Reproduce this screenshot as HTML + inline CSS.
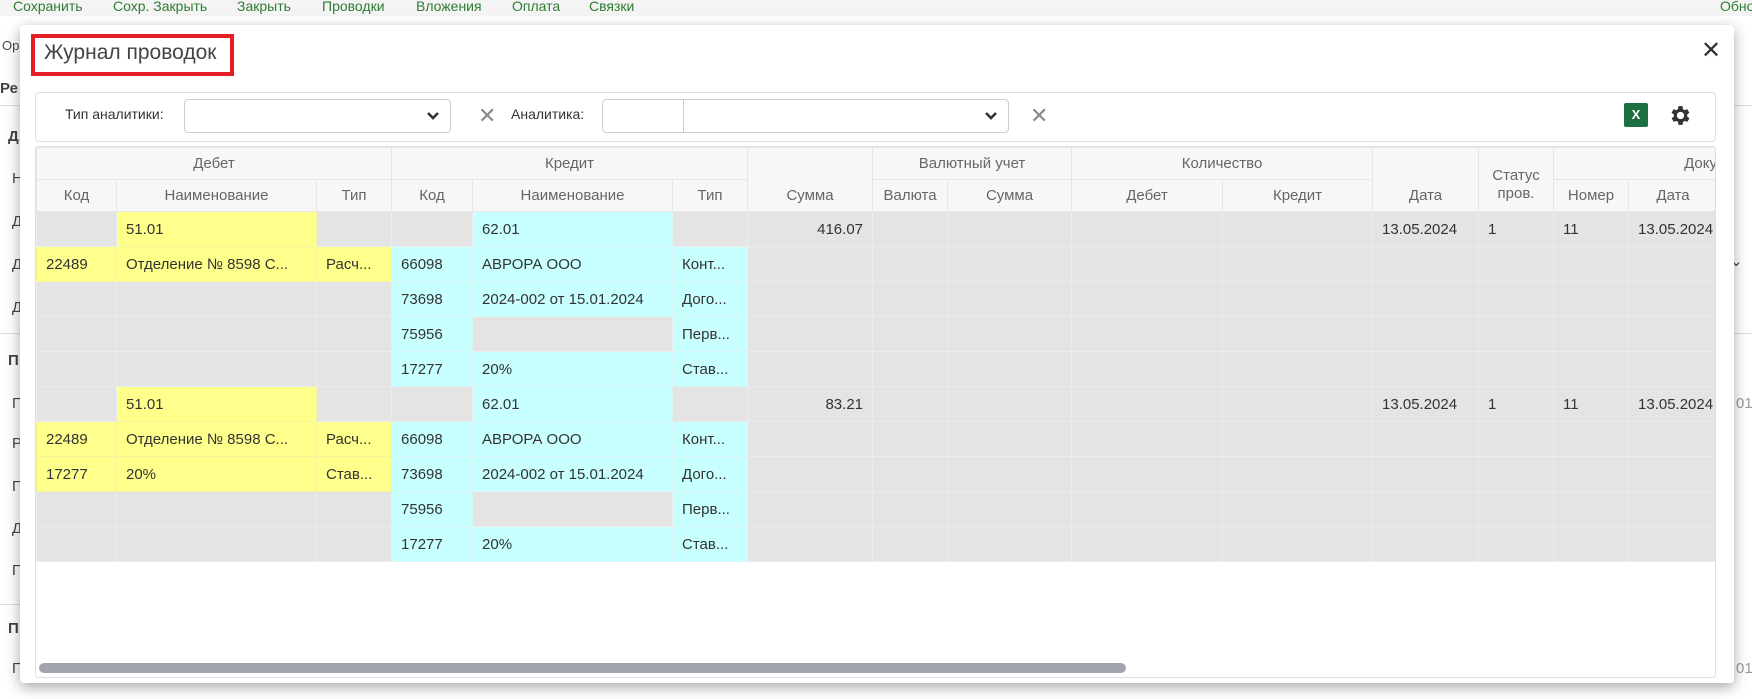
<!DOCTYPE html>
<html><head><meta charset="utf-8"><style>
*{box-sizing:border-box;margin:0;padding:0}
body{width:1752px;height:699px;overflow:hidden;background:#fff;font-family:"Liberation Sans","DejaVu Sans",sans-serif;position:relative;color:#333}
.tb{position:absolute;left:0;top:0;width:1752px;height:16px;background:#f4f4f4}
.tb span{position:absolute;top:-2px;font-size:14px;color:#2e7d32}
.bg{position:absolute;font-size:15px;color:#444}
.hl{position:absolute;height:1px;background:#dde}
.modal{position:absolute;left:20px;top:25px;width:1714px;height:658px;background:#fff;border-radius:4px;box-shadow:0 4px 14px rgba(0,0,0,.35)}
.title{position:absolute;left:11px;top:9px;width:203px;height:42px;border:4px solid #e31e24;font-size:21px;color:#444;padding:3px 0 0 9px}
.close{position:absolute;left:1681px;top:11px;font-size:24px;font-weight:bold;color:#333}
.filter{position:absolute;left:15px;top:67px;width:1681px;height:50px;border:1px solid #dde;border-radius:4px}
.sel{position:absolute;top:6px;height:34px;border:1px solid #ccc;border-radius:4px;background:#fff}
.lbl{position:absolute;top:13px;font-size:14px;color:#333}
.xx{position:absolute;top:10px;font-size:22px;color:#888}
.grid{position:absolute;left:15px;top:121px;width:1681px;height:532px;border:1px solid #dde;border-radius:3px;overflow:hidden}
table{border-collapse:collapse;table-layout:fixed;width:1681px}
td,th{white-space:nowrap;overflow:hidden;font-weight:normal}
th{background:#f7f7f7;color:#666;font-size:15px;border:1px solid #e6e6e6;text-align:center}
td{height:35px;font-size:15px;padding-left:9px;background:#e4e4e4;border:1px solid #ececec}
td.y{background:#ffff8c;border-color:#f5f5a0}
td.c{background:#c8ffff;border-color:#d8f5f5}
td.r{text-align:right;padding-right:9px}
.sb{position:absolute;left:3px;top:516px;width:1087px;height:10px;border-radius:5px;background:#a2a4ab}
</style></head><body>
<div class="tb">
<span style="left:13px">Сохранить</span><span style="left:113px">Сохр. Закрыть</span><span style="left:237px">Закрыть</span><span style="left:322px">Проводки</span><span style="left:416px">Вложения</span><span style="left:512px">Оплата</span><span style="left:589px">Связки</span><span style="left:1720px">Обно</span>
</div>
<div class="bg" style="left:2px;top:38px;font-size:13px">Ор</div>
<div class="bg" style="left:0;top:80px;font-weight:bold">Ре</div>
<div class="hl" style="left:0;top:105px;width:20px"></div>
<div class="bg" style="left:8px;top:128px;font-weight:bold">Д</div>
<div class="bg" style="left:12px;top:170px">Н</div>
<div class="bg" style="left:12px;top:213px">Д</div>
<div class="bg" style="left:12px;top:256px">Д</div>
<div class="bg" style="left:12px;top:299px">Д</div>
<div class="hl" style="left:0;top:333px;width:20px"></div>
<div class="bg" style="left:8px;top:352px;font-weight:bold">П</div>
<div class="bg" style="left:12px;top:395px">П</div>
<div class="bg" style="left:12px;top:435px">Р</div>
<div class="bg" style="left:12px;top:478px">П</div>
<div class="bg" style="left:12px;top:520px">Д</div>
<div class="bg" style="left:12px;top:562px">П</div>
<div class="hl" style="left:0;top:604px;width:20px"></div>
<div class="bg" style="left:8px;top:620px;font-weight:bold">П</div>
<div class="bg" style="left:12px;top:660px">П</div>
<div class="hl" style="left:1734px;top:105px;width:18px"></div>
<div class="hl" style="left:1734px;top:333px;width:18px"></div>
<div class="bg" style="left:1730px;top:252px">⌄</div>
<div class="bg" style="left:1736px;top:395px;color:#999">01</div>
<div class="bg" style="left:1736px;top:660px;color:#999">01</div>
<div class="modal">
<div class="title">Журнал проводок</div>
<div class="close">✕</div>
<div class="filter">
<span class="lbl" style="left:29px">Тип аналитики:</span>
<div class="sel" style="left:148px;width:267px"><svg style="position:absolute;right:10px;top:11px" width="14" height="10" viewBox="0 0 14 10"><path d="M2 2l5 5 5-5" stroke="#333" stroke-width="2.6" fill="none"/></svg></div>
<span class="xx" style="left:442px">✕</span>
<span class="lbl" style="left:475px">Аналитика:</span>
<div class="sel" style="left:566px;width:407px"><div style="position:absolute;left:80px;top:0;width:1px;height:32px;background:#ccc"></div><svg style="position:absolute;right:10px;top:11px" width="14" height="10" viewBox="0 0 14 10"><path d="M2 2l5 5 5-5" stroke="#333" stroke-width="2.6" fill="none"/></svg></div>
<span class="xx" style="left:994px">✕</span>
<div style="position:absolute;left:1588px;top:10px;width:24px;height:24px;background:#1d6f42;border-radius:2px;color:#fff;font-size:13px;font-weight:bold;text-align:center;line-height:24px">X</div>
<svg style="position:absolute;left:1632px;top:10px" width="25" height="25" viewBox="0 0 24 24"><path fill="#333" d="M19.4 13a7.5 7.5 0 0 0 0-2l2.1-1.6-2-3.5-2.5 1a7.6 7.6 0 0 0-1.7-1L15 3h-4l-.4 2.9a7.6 7.6 0 0 0-1.7 1l-2.5-1-2 3.5L6.6 11a7.5 7.5 0 0 0 0 2l-2.1 1.6 2 3.5 2.5-1a7.6 7.6 0 0 0 1.7 1L11 21h4l.4-2.9a7.6 7.6 0 0 0 1.7-1l2.5 1 2-3.5zM13 15.5a3.5 3.5 0 1 1 0-7 3.5 3.5 0 0 1 0 7z" transform="translate(-1 0)"/></svg>
</div>
<div class="grid">
<table>
<colgroup><col style="width:80px"><col style="width:200px"><col style="width:75px"><col style="width:81px"><col style="width:200px"><col style="width:75px"><col style="width:125px"><col style="width:75px"><col style="width:124px"><col style="width:151px"><col style="width:150px"><col style="width:106px"><col style="width:75px"><col style="width:75px"><col style="width:89px"></colgroup>
<tr style="height:32px"><th colspan="3">Дебет</th><th colspan="3">Кредит</th><th rowspan="2" style="vertical-align:bottom;padding-bottom:7px">Сумма</th><th colspan="2">Валютный учет</th><th colspan="2">Количество</th><th rowspan="2" style="vertical-align:bottom;padding-bottom:7px">Дата</th><th rowspan="2" style="line-height:18px;padding-top:10px">Статус<br>пров.</th><th colspan="2" style="text-align:right">Доку</th></tr>
<tr style="height:32px"><th>Код</th><th>Наименование</th><th>Тип</th><th>Код</th><th>Наименование</th><th>Тип</th><th>Валюта</th><th>Сумма</th><th>Дебет</th><th>Кредит</th><th>Номер</th><th>Дата</th></tr>
<tr><td></td><td class="y">51.01</td><td></td><td></td><td class="c">62.01</td><td></td><td class="r">416.07</td><td></td><td></td><td></td><td></td><td>13.05.2024</td><td>1</td><td>11</td><td>13.05.2024</td></tr>
<tr><td class="y">22489</td><td class="y">Отделение № 8598 С...</td><td class="y">Расч...</td><td class="c">66098</td><td class="c">АВРОРА ООО</td><td class="c">Конт...</td><td></td><td></td><td></td><td></td><td></td><td></td><td></td><td></td><td></td></tr>
<tr><td></td><td></td><td></td><td class="c">73698</td><td class="c">2024-002 от 15.01.2024</td><td class="c">Дого...</td><td></td><td></td><td></td><td></td><td></td><td></td><td></td><td></td><td></td></tr>
<tr><td></td><td></td><td></td><td class="c">75956</td><td></td><td class="c">Перв...</td><td></td><td></td><td></td><td></td><td></td><td></td><td></td><td></td><td></td></tr>
<tr><td></td><td></td><td></td><td class="c">17277</td><td class="c">20%</td><td class="c">Став...</td><td></td><td></td><td></td><td></td><td></td><td></td><td></td><td></td><td></td></tr>
<tr><td></td><td class="y">51.01</td><td></td><td></td><td class="c">62.01</td><td></td><td class="r">83.21</td><td></td><td></td><td></td><td></td><td>13.05.2024</td><td>1</td><td>11</td><td>13.05.2024</td></tr>
<tr><td class="y">22489</td><td class="y">Отделение № 8598 С...</td><td class="y">Расч...</td><td class="c">66098</td><td class="c">АВРОРА ООО</td><td class="c">Конт...</td><td></td><td></td><td></td><td></td><td></td><td></td><td></td><td></td><td></td></tr>
<tr><td class="y">17277</td><td class="y">20%</td><td class="y">Став...</td><td class="c">73698</td><td class="c">2024-002 от 15.01.2024</td><td class="c">Дого...</td><td></td><td></td><td></td><td></td><td></td><td></td><td></td><td></td><td></td></tr>
<tr><td></td><td></td><td></td><td class="c">75956</td><td></td><td class="c">Перв...</td><td></td><td></td><td></td><td></td><td></td><td></td><td></td><td></td><td></td></tr>
<tr><td></td><td></td><td></td><td class="c">17277</td><td class="c">20%</td><td class="c">Став...</td><td></td><td></td><td></td><td></td><td></td><td></td><td></td><td></td><td></td></tr>
</table>
<div class="sb"></div>
</div>
</div>
</body></html>
